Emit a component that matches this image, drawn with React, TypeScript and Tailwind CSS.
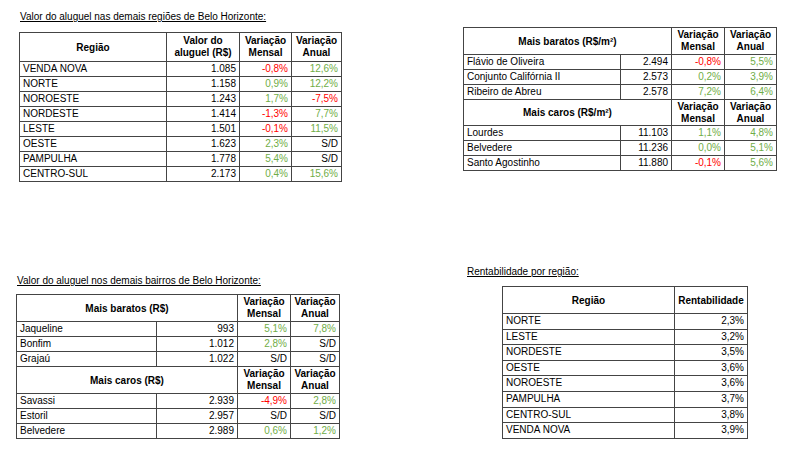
import React from 'react';

type Tone = 'red' | 'green' | 'plain';

interface DataRow {
  name: string;
  value: string;
  mensal?: [string, Tone];
  anual?: [string, Tone];
}

const toneClass = (t: Tone) =>
  t === 'red' ? 'text-[#ff0000]' : t === 'green' ? 'text-[#70ad47]' : 'text-black';

const regioes: DataRow[] = [
  { name: 'VENDA NOVA', value: '1.085', mensal: ['-0,8%', 'red'], anual: ['12,6%', 'green'] },
  { name: 'NORTE', value: '1.158', mensal: ['0,9%', 'green'], anual: ['12,2%', 'green'] },
  { name: 'NOROESTE', value: '1.243', mensal: ['1,7%', 'green'], anual: ['-7,5%', 'red'] },
  { name: 'NORDESTE', value: '1.414', mensal: ['-1,3%', 'red'], anual: ['7,7%', 'green'] },
  { name: 'LESTE', value: '1.501', mensal: ['-0,1%', 'red'], anual: ['11,5%', 'green'] },
  { name: 'OESTE', value: '1.623', mensal: ['2,3%', 'green'], anual: ['S/D', 'plain'] },
  { name: 'PAMPULHA', value: '1.778', mensal: ['5,4%', 'green'], anual: ['S/D', 'plain'] },
  { name: 'CENTRO-SUL', value: '2.173', mensal: ['0,4%', 'green'], anual: ['15,6%', 'green'] },
];

const m2Baratos: DataRow[] = [
  { name: 'Flávio de Oliveira', value: '2.494', mensal: ['-0,8%', 'red'], anual: ['5,5%', 'green'] },
  { name: 'Conjunto Califórnia II', value: '2.573', mensal: ['0,2%', 'green'], anual: ['3,9%', 'green'] },
  { name: 'Ribeiro de Abreu', value: '2.578', mensal: ['7,2%', 'green'], anual: ['6,4%', 'green'] },
];

const m2Caros: DataRow[] = [
  { name: 'Lourdes', value: '11.103', mensal: ['1,1%', 'green'], anual: ['4,8%', 'green'] },
  { name: 'Belvedere', value: '11.236', mensal: ['0,0%', 'green'], anual: ['5,1%', 'green'] },
  { name: 'Santo Agostinho', value: '11.880', mensal: ['-0,1%', 'red'], anual: ['5,6%', 'green'] },
];

const bairrosBaratos: DataRow[] = [
  { name: 'Jaqueline', value: '993', mensal: ['5,1%', 'green'], anual: ['7,8%', 'green'] },
  { name: 'Bonfim', value: '1.012', mensal: ['2,8%', 'green'], anual: ['S/D', 'plain'] },
  { name: 'Grajaú', value: '1.022', mensal: ['S/D', 'plain'], anual: ['S/D', 'plain'] },
];

const bairrosCaros: DataRow[] = [
  { name: 'Savassi', value: '2.939', mensal: ['-4,9%', 'red'], anual: ['2,8%', 'green'] },
  { name: 'Estoril', value: '2.957', mensal: ['S/D', 'plain'], anual: ['S/D', 'plain'] },
  { name: 'Belvedere', value: '2.989', mensal: ['0,6%', 'green'], anual: ['1,2%', 'green'] },
];

const rentabilidade = [
  ['NORTE', '2,3%'],
  ['LESTE', '3,2%'],
  ['NORDESTE', '3,5%'],
  ['OESTE', '3,6%'],
  ['NOROESTE', '3,6%'],
  ['PAMPULHA', '3,7%'],
  ['CENTRO-SUL', '3,8%'],
  ['VENDA NOVA', '3,9%'],
];

const Title: React.FC<{ children: React.ReactNode }> = ({ children }) => (
  <div className="text-[10px] leading-[12px] underline underline-offset-[1px] text-black">{children}</div>
);

// one data row with four columns; widths passed as full class names
const Row: React.FC<{ r: DataRow; w: [string, string, string] }> = ({ r, w }) => (
  <div className="flex h-[15px] border-t border-[#444] leading-[14px]">
    <div className={`${w[0]} pl-[3px] truncate`}>{r.name}</div>
    <div className={`${w[1]} border-l border-[#444] pr-[3px] text-right`}>{r.value}</div>
    <div className={`${w[2]} border-l border-[#444] pr-[3px] text-right ${toneClass(r.mensal![1])}`}>{r.mensal![0]}</div>
    <div className={`flex-1 border-l border-[#444] pr-[3px] text-right ${toneClass(r.anual![1])}`}>{r.anual![0]}</div>
  </div>
);

const VarHeaders: React.FC<{ w: string; h: string }> = ({ w, h }) => (
  <>
    <div className={`${w} ${h} border-l border-[#444] flex items-center justify-center text-center font-bold leading-[12px]`}>
      Variação<br />Mensal
    </div>
    <div className={`flex-1 ${h} border-l border-[#444] flex items-center justify-center text-center font-bold leading-[12px]`}>
      Variação<br />Anual
    </div>
  </>
);

export default function App() {
  return (
    <div
      className="w-[797px] h-[461px] bg-white text-black text-[10px] overflow-hidden flex flex-col"
      style={{ fontFamily: '"Liberation Sans", Arial, sans-serif' }}
    >
      {/* top row */}
      <div className="flex items-start h-[183px]">
        <div className="ml-[19px] mt-[11px] flex flex-col">
          <div className="pl-[1px]">
            <Title>Valor do aluguel nas demais regiões de Belo Horizonte:</Title>
          </div>
          <div className="mt-[9px] w-[323px] border border-[#444]">
            <div className="flex h-[28px]">
              <div className="w-[146px] flex items-center justify-center font-bold">Região</div>
              <div className="w-[73px] border-l border-[#444] flex items-center justify-center text-center font-bold leading-[12px]">
                Valor do<br />aluguel (R$)
              </div>
              <VarHeaders w="w-[52px]" h="h-[28px]" />
            </div>
            {regioes.map((r) => (
              <Row key={r.name} r={r} w={['w-[146px]', 'w-[73px]', 'w-[52px]']} />
            ))}
          </div>
        </div>

        <div className="ml-[121px] mt-[27px] w-[314px] border border-[#444]">
          <div className="flex h-[26px]">
            <div className="w-[207px] flex items-center justify-center font-bold">Mais baratos (R$/m²)</div>
            <VarHeaders w="w-[53px]" h="h-[26px]" />
          </div>
          {m2Baratos.map((r) => (
            <Row key={r.name} r={r} w={['w-[156px]', 'w-[51px]', 'w-[53px]']} />
          ))}
          <div className="flex h-[26px] border-t border-[#444]">
            <div className="w-[207px] flex items-center justify-center font-bold">Mais caros (R$/m²)</div>
            <VarHeaders w="w-[53px]" h="h-full" />
          </div>
          {m2Caros.map((r) => (
            <Row key={r.name} r={r} w={['w-[156px]', 'w-[51px]', 'w-[53px]']} />
          ))}
        </div>
      </div>

      {/* bottom row */}
      <div className="flex items-start mt-[83px]">
        <div className="ml-[16px] mt-[9px] flex flex-col">
          <div className="pl-[1px]">
            <Title>Valor do aluguel nos demais bairros de Belo Horizonte:</Title>
          </div>
          <div className="mt-[7px] w-[324px] border border-[#444]">
            <div className="flex h-[26px]">
              <div className="w-[220px] flex items-center justify-center font-bold">Mais baratos (R$)</div>
              <VarHeaders w="w-[53px]" h="h-[26px]" />
            </div>
            {bairrosBaratos.map((r) => (
              <Row key={r.name} r={r} w={['w-[139px]', 'w-[81px]', 'w-[53px]']} />
            ))}
            <div className="flex h-[27px] border-t border-[#444]">
              <div className="w-[220px] flex items-center justify-center font-bold">Mais caros (R$)</div>
              <VarHeaders w="w-[53px]" h="h-full" />
            </div>
            {bairrosCaros.map((r) => (
              <Row key={r.name} r={r} w={['w-[139px]', 'w-[81px]', 'w-[53px]']} />
            ))}
          </div>
        </div>

        <div className="ml-[126px] flex flex-col">
          <div className="pl-[1px]">
            <Title>Rentabilidade por região:</Title>
          </div>
          <div className="mt-[8px] ml-[36px] w-[246px] border border-[#444]">
            <div className="flex h-[26px] font-bold">
              <div className="w-[171px] flex items-center justify-center">Região</div>
              <div className="flex-1 border-l border-[#444] flex items-center justify-center">Rentabilidade</div>
            </div>
            {rentabilidade.map(([n, v]) => (
              <div key={n} className="flex h-[15.6px] border-t border-[#444] leading-[14px]">
                <div className="w-[171px] pl-[3px]">{n}</div>
                <div className="flex-1 border-l border-[#444] pr-[3px] text-right">{v}</div>
              </div>
            ))}
          </div>
        </div>
      </div>
    </div>
  );
}
